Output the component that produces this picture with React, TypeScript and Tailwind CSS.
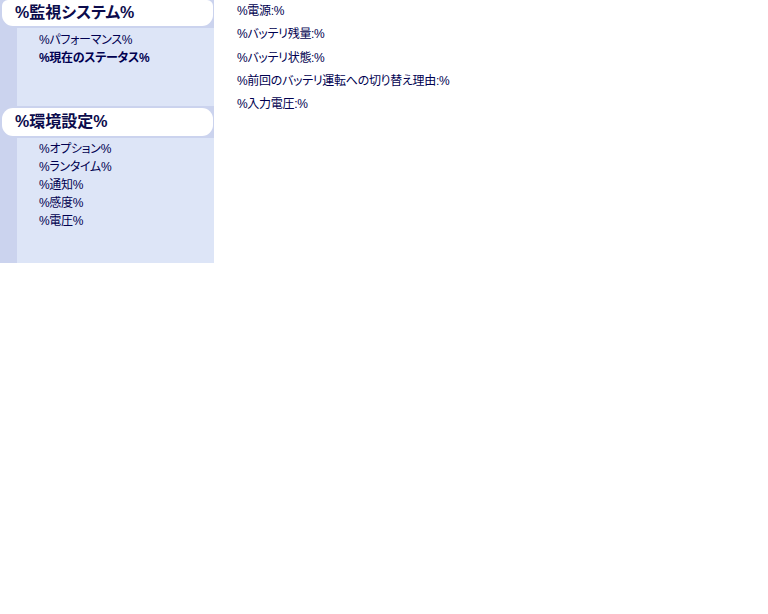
const font = { fontFamily: '"Liberation Sans", "Noto Sans CJK JP", sans-serif' };

interface SectionProps {
  title: string;
  items: { label: string; active?: boolean }[];
  bodyHeight: string;
  first?: boolean;
}

function Section({ title, items, bodyHeight, first }: SectionProps) {
  return (
    <div>
      <div className={`bg-[#cbd3ee] pb-[2px] pl-[2px] pr-[1px] ${first ? "pt-0" : "pt-[2px]"}`}>
        <div
          className={`${first ? "h-[26px] rounded-b-[11px] rounded-t-[6px]" : "h-[28px] rounded-[11px]"} bg-white pl-[13px] flex items-center text-[16px] font-bold text-[#0c0c4c]`}
        >
          {title}
        </div>
      </div>
      <div className={`flex ${bodyHeight}`}>
        <div className="w-[17px] bg-[#cbd3ee]" />
        <ul className={`flex-1 bg-[#dde5f7] pl-[22px] ${first ? "pt-[3px]" : "pt-[2px]"}`}>
          {items.map((it) => (
            <li
              key={it.label}
              className={`h-[18px] leading-[18px] text-[12px] tracking-[-0.3px] text-[#000050] ${it.active ? "font-bold" : ""}`}
            >
              {it.label}
            </li>
          ))}
        </ul>
      </div>
    </div>
  );
}

export default function App() {
  const rows = [
    "%電源:%",
    "%バッテリ残量:%",
    "%バッテリ状態:%",
    "%前回のバッテリ運転への切り替え理由:%",
    "%入力電圧:%",
  ];

  return (
    <div
      className="w-[768px] h-[614px] bg-white flex items-start overflow-hidden [font-feature-settings:'palt']"
      style={font}
    >
      <aside className="w-[214px] shrink-0">
        <Section
          first
          title="%監視システム%"
          bodyHeight="h-[78px]"
          items={[{ label: "%パフォーマンス%" }, { label: "%現在のステータス%", active: true }]}
        />
        <Section
          title="%環境設定%"
          bodyHeight="h-[125px]"
          items={[
            { label: "%オプション%" },
            { label: "%ランタイム%" },
            { label: "%通知%" },
            { label: "%感度%" },
            { label: "%電圧%" },
          ]}
        />
      </aside>
      <main className="pl-[23px]">
        {rows.map((r, i) => (
          <div
            key={r}
            className={`h-[23px] leading-[23px] text-[12px] tracking-[-0.3px] text-[#000050] ${i >= 2 ? "translate-y-[1px]" : ""}`}
          >
            {r}
          </div>
        ))}
      </main>
    </div>
  );
}
